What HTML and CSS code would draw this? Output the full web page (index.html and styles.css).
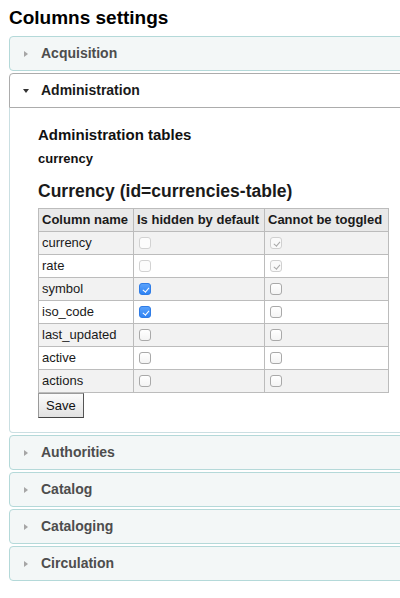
FILE: index.html
```html
<!DOCTYPE html>
<html>
<head>
<meta charset="utf-8">
<link rel="stylesheet" href="styles.css">
</head>
<body>
<div class="page">
  <h1 class="title">Columns settings</h1>
  <div class="accordion">
    <div class="acc-header"><span class="tri-right"></span><span>Acquisition</span></div>
    <div class="acc-header active"><span class="tri-down"></span><span>Administration</span></div>
    <div class="acc-panel">
      <h3 class="section-title">Administration tables</h3>
      <p class="table-key">currency</p>
      <h2 class="table-title">Currency (id=currencies-table)</h2>
      <table class="cols">
        <colgroup><col class="c1"><col class="c2"><col class="c3"></colgroup>
        <thead>
          <tr><th>Column name</th><th>Is hidden by default</th><th>Cannot be toggled</th></tr>
        </thead>
        <tbody>
          <tr class="odd"><td>currency</td><td><input type="checkbox" disabled></td><td><input type="checkbox" checked disabled></td></tr>
          <tr><td>rate</td><td><input type="checkbox" disabled></td><td><input type="checkbox" checked disabled></td></tr>
          <tr class="odd"><td>symbol</td><td><input type="checkbox" checked></td><td><input type="checkbox"></td></tr>
          <tr><td>iso_code</td><td><input type="checkbox" checked></td><td><input type="checkbox"></td></tr>
          <tr class="odd"><td>last_updated</td><td><input type="checkbox"></td><td><input type="checkbox"></td></tr>
          <tr><td>active</td><td><input type="checkbox"></td><td><input type="checkbox"></td></tr>
          <tr class="odd"><td>actions</td><td><input type="checkbox"></td><td><input type="checkbox"></td></tr>
        </tbody>
      </table>
      <div class="actions"><button class="save">Save</button></div>
    </div>
    <div class="acc-header"><span class="tri-right"></span><span>Authorities</span></div>
    <div class="acc-header"><span class="tri-right"></span><span>Catalog</span></div>
    <div class="acc-header"><span class="tri-right"></span><span>Cataloging</span></div>
    <div class="acc-header"><span class="tri-right"></span><span>Circulation</span></div>
  </div>
</div>
</body>
</html>
```
FILE: styles.css
```css
html, body {
  margin: 0;
  padding: 0;
  background: #fff;
  overflow: hidden;
}
body {
  font-family: "Liberation Sans", Arial, sans-serif;
  color: #000;
  font-size: 13px;
}
.page {
  padding-left: 9px;
  width: 400px;
  box-sizing: border-box;
  overflow: hidden;
}
.title {
  margin: 0 0 7px 0;
  padding-top: 7px;
  font-size: 19px;
  line-height: 22px;
  font-weight: bold;
  color: #000;
}
.accordion {
  width: 420px;
}
.acc-header {
  display: flex;
  align-items: center;
  height: 33px;
  box-sizing: content-box;
  margin-top: 2px;
  padding: 0 0 0 14px;
  border: 1px solid #b4d9d9;
  border-radius: 4px;
  background: #f3f7f7;
  color: #4d4d4d;
  font-size: 14px;
  font-weight: bold;
  line-height: 17px;
}
.accordion .acc-header:first-child {
  margin-top: 0;
}
.acc-header.active {
  background: #fff;
  border-color: #acacac;
  border-radius: 4px 4px 0 0;
  color: #1a1a1a;
}
.tri-right {
  width: 0;
  height: 0;
  border-top: 3.5px solid transparent;
  border-bottom: 3.5px solid transparent;
  border-left: 4px solid #a6a6a6;
  margin-right: 13px;
}
.tri-down {
  width: 0;
  height: 0;
  border-left: 3.5px solid transparent;
  border-right: 3.5px solid transparent;
  border-top: 4px solid #333;
  margin-left: -1px;
  margin-right: 12px;
  margin-top: 1px;
}
.acc-panel {
  border: 1px solid #cadfe2;
  border-top: 0;
  border-radius: 0 0 4px 4px;
  padding: 18px 0 14px 28px;
}
.section-title {
  margin: 0 0 7px 0;
  font-size: 15px;
  line-height: 18px;
  font-weight: bold;
  color: #111;
}
.table-key {
  margin: 0;
  font-size: 13px;
  line-height: 16px;
  font-weight: bold;
  color: #111;
}
.table-title {
  margin: 13px 0 6px 0;
  font-size: 17.5px;
  line-height: 22px;
  font-weight: bold;
  color: #1a1a1a;
}
.cols {
  border-collapse: collapse;
  table-layout: fixed;
  width: 351px;
  font-size: 13px;
}
.cols col.c1 { width: 95px; }
.cols col.c2 { width: 131px; }
.cols col.c3 { width: 124px; }
.cols th, .cols td {
  border: 1px solid #bcbcbc;
  padding: 3px 3px;
  line-height: 16px;
  height: 16px;
  text-align: left;
  white-space: nowrap;
  vertical-align: middle;
}
.cols th {
  background: #e9e9e9;
  font-weight: bold;
  color: #1a1a1a;
}
.cols td {
  color: #1a1a1a;
  background: #fff;
}
.cols tr.odd td {
  background: #f2f2f2;
}
.cols input[type="checkbox"] {
  appearance: none;
  -webkit-appearance: none;
  position: relative;
  display: block;
  width: 12px;
  height: 12px;
  margin: 0 0 0 2px;
  border: 1px solid #a9a9a9;
  border-radius: 3px;
  background: linear-gradient(#ffffff, #f4f4f4);
  box-sizing: border-box;
}
.cols input[type="checkbox"]:disabled {
  border-color: #d2d2d2;
  background: #fcfcfc;
}
.cols input[type="checkbox"]:checked {
  border-color: #2f7ce6;
  background: linear-gradient(#5aa2fb, #2f83f4);
}
.cols input[type="checkbox"]:checked::after {
  content: "";
  position: absolute;
  left: 3.5px;
  top: 1.5px;
  width: 2.5px;
  height: 5px;
  border-right: 1.6px solid #fff;
  border-bottom: 1.6px solid #fff;
  transform: rotate(40deg);
}
.cols input[type="checkbox"]:checked:disabled {
  border-color: #d0d0d0;
  background: #fafafa;
}
.cols input[type="checkbox"]:checked:disabled::after {
  border-color: #a8a8a8;
  border-right-width: 1px;
  border-bottom-width: 1px;
}
.actions {
  display: block;
}
.save {
  display: block;
  margin: 0;
  height: 25px;
  padding: 0 7px;
  font-family: "Liberation Sans", Arial, sans-serif;
  font-size: 13px;
  color: #111;
  border: 1px solid #9a9a9a;
  border-right-color: #555;
  border-bottom-color: #444;
  border-radius: 0;
  background: linear-gradient(#fbfbfb, #e2e2e2);
}
```
